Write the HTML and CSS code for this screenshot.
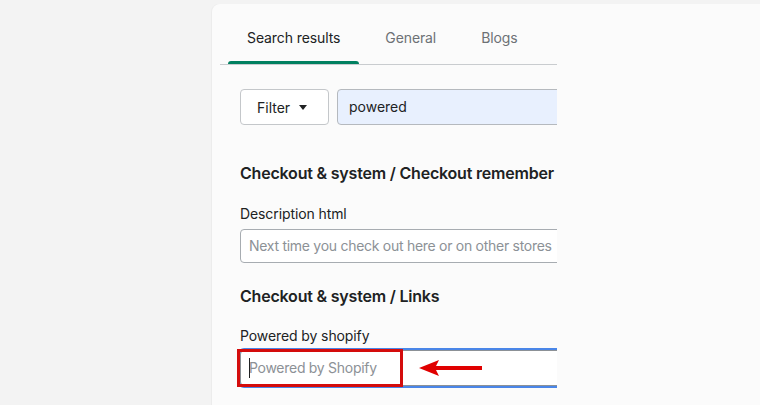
FILE: index.html
```html
<!DOCTYPE html>
<html lang="en">
<head>
<meta charset="utf-8">
<title>Search results</title>
<link rel="stylesheet" href="styles.css">
</head>
<body>
<div class="card">
  <div class="clip">
    <div class="tabs">
      <div class="tab active">Search results</div>
      <div class="tab">General</div>
      <div class="tab">Blogs</div>
    </div>
    <div class="content">
      <div class="filter-row">
        <button class="filter-btn">Filter <span class="tri"></span></button>
        <div class="search">powered</div>
      </div>

      <h2 class="section">Checkout &amp; system / Checkout remember</h2>
      <div class="label">Description html</div>
      <div class="field field-desc"><span class="ph">Next time you check out here or on other stores</span></div>

      <h2 class="section section-2">Checkout &amp; system / Links</h2>
      <div class="label">Powered by shopify</div>
      <div class="field field-focus"><span class="caret"></span><span class="ph">Powered by Shopify</span></div>
    </div>
  </div>
</div>

<div class="highlight"></div>
<svg class="arrow" width="66" height="16" viewBox="0 0 66 16">
  <polygon points="0,8 20,0 17,6 63,6 63,10 17,10 20,16" fill="#e00000"/>
</svg>
</body>
</html>
```

FILE: styles.css
```css
html, body {
  margin: 0;
  padding: 0;
}
body {
  background: #f3f3f3;
  font-family: Inter, "Noto Sans", "Liberation Sans", sans-serif;
  color: #202223;
  height: 405px;
  overflow: hidden;
}
.card {
  margin: 4px 0 0 212px;
  height: 420px;
  background: #fbfbfb;
  border-radius: 8px 0 0 0;
  box-shadow: -1px 0 0 #ececec;
}
.clip {
  width: 337px;
  padding-left: 8px;
  overflow: hidden;
  height: 420px;
}
.tabs {
  display: flex;
  gap: 7px;
  padding-left: 8px;
  height: 60px;
  border-bottom: 1px solid #c9cccf;
  width: 600px;
}
.tab {
  box-sizing: border-box;
  height: 60px;
  padding: 24px 19px 0;
  font-size: 14px;
  line-height: 20px;
  color: #6d7175;
  position: relative;
  letter-spacing: -0.1px;
}
.tab.active {
  color: #202223;
}
.tab.active::after {
  content: "";
  position: absolute;
  left: 0;
  right: 0;
  bottom: 0;
  height: 3px;
  background: #008060;
  border-radius: 3px 3px 0 0;
}
.content {
  padding-left: 20px;
  width: 600px;
}
.filter-row {
  display: flex;
  gap: 8px;
  margin-top: 24px;
  height: 36px;
}
.filter-btn {
  box-sizing: border-box;
  width: 89px;
  height: 36px;
  background: #ffffff;
  border: 1px solid #c4c7ca;
  border-radius: 4px;
  font-family: inherit;
  font-size: 14px;
  color: #202223;
  display: flex;
  align-items: center;
  justify-content: flex-start;
  gap: 9px;
  padding: 0 0 0 16px;
}
.tri {
  width: 0;
  height: 0;
  border-left: 4.5px solid transparent;
  border-right: 4.5px solid transparent;
  border-top: 5px solid #202223;
  margin-top: 1px;
}
.search {
  box-sizing: border-box;
  flex: 1;
  height: 36px;
  background: #e8f0fe;
  border: 1px solid #b5b9be;
  border-radius: 4px;
  font-size: 14px;
  line-height: 34px;
  padding-left: 11px;
}
.section {
  margin: 36px 0 0;
  font-size: 16px;
  font-weight: 600;
  line-height: 24px;
  letter-spacing: -0.2px;
}
.section-2 {
  margin-top: 21px;
}
.label {
  font-size: 14px;
  line-height: 20px;
  margin-top: 19px;
  letter-spacing: -0.1px;
}
.section-2 + .label {
  margin-top: 18px;
}
.field {
  box-sizing: border-box;
  position: relative;
  height: 34px;
  background: #ffffff;
  border: 1px solid #a7acb1;
  border-radius: 4px;
  font-size: 14px;
  line-height: 32px;
  padding-left: 8px;
  margin-top: 5px;
  white-space: nowrap;
}
.ph {
  color: #8c9196;
  letter-spacing: -0.28px;
}
.field-focus {
  height: 36px;
  line-height: 34px;
  margin-top: 4px;
  border-color: #8c9196;
  box-shadow: 0 0 0 2px #4a86e8;
}
.caret {
  position: absolute;
  left: 8px;
  top: 7px;
  width: 1px;
  height: 20px;
  background: #202223;
}
.highlight {
  position: absolute;
  left: 237px;
  top: 349px;
  width: 160px;
  height: 32px;
  border: 3px solid #d40c0c;
}
.arrow {
  position: absolute;
  left: 419px;
  top: 360px;
}
```
